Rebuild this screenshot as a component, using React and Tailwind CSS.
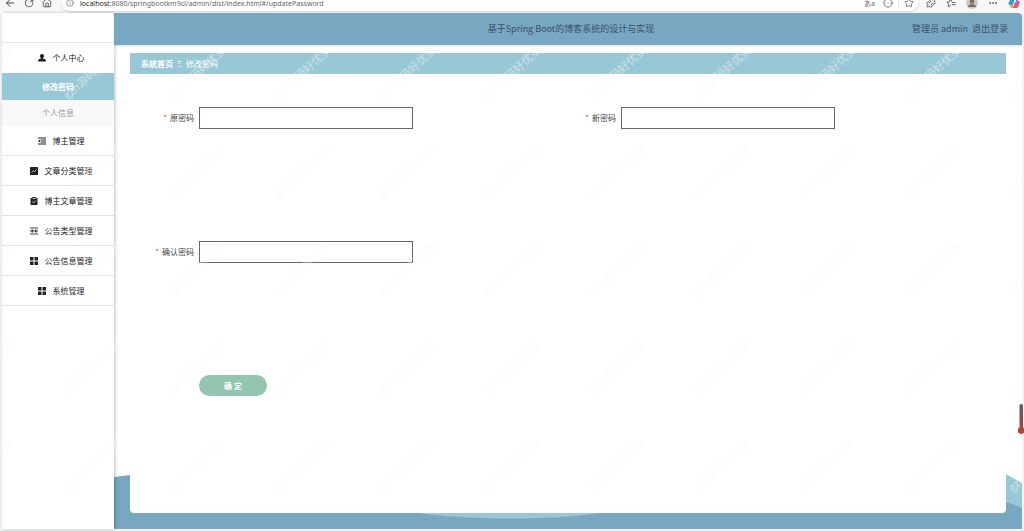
import React, { useState } from 'react';
import {
  LuArrowLeft,
  LuRotateCw,
  LuHouse,
  LuInfo,
  LuStar,
  LuPuzzle,
  LuEllipsis,
  LuCircleEllipsis,
} from 'react-icons/lu';

const icons = {
  user: (
    <path d="M8 0c2.500 0 4 1.800 4 4.200 0 1.800-.8 3.300-2 4v1l4.300 1.400c1 .4 1.500 1 1.500 2V15H.2v-2.400c0-1 .5-1.600 1.500-2L6 9.200v-1c-1.200-.7-2-2.200-2-4C4 1.800 5.500 0 8 0z" />
  ),
  fold: <path d="M0 1h16v2H0zM6 5h10v2H6zM6 9h10v2H6zM0 13h16v2H0zM0 8l4.500-3v6z" />,
  chart: (
    <>
      <rect width="16" height="16" rx="1" />
      <path d="M3 11l3.500-3.500 2 2L13 5" fill="none" stroke="#fff" strokeWidth="1.300" />
    </>
  ),
  claim: (
    <>
      <path d="M1 2h3.500V0h7v2H15v14H1z" />
      <path d="M5 3h6M4.500 9l2.800 2.500L11.800 7" fill="none" stroke="#fff" strokeWidth="1.500" />
    </>
  ),
  operation: <path d="M0 1h16v2H0zM0 13h16v2H0zM0 7h16v2H0zM3 5h3v6H3zM10 5h3v6h-3z" opacity=".85" />,
  grid: <path d="M0 0h7v7H0zM9 0h7v7H9zM0 9h7v7H0zM9 9h7v7H9z" />,
};

const menu = [
  { name: '博主管理', icon: 'fold' },
  { name: '文章分类管理', icon: 'chart' },
  { name: '博主文章管理', icon: 'claim' },
  { name: '公告类型管理', icon: 'operation' },
  { name: '公告信息管理', icon: 'grid' },
  { name: '系统管理', icon: 'grid' },
];

const fields = [
  { id: 'password', label: '原密码' },
  { id: 'newpassword', label: '新密码' },
  { id: 'ripassword', label: '确认密码' },
];

function MenuIcon({ name }) {
  return (
    <svg viewBox="0 0 16 16" className="h-2 w-2 shrink-0" fill="currentColor" aria-hidden="true">
      {icons[name]}
    </svg>
  );
}

function BrowserBar() {
  return (
    <div className="flex h-[13px] items-end overflow-hidden bg-[#f7f7f7] text-[#444]">
      <div className="flex h-5 flex-1 items-center">
        <div className="flex w-[62px] items-center gap-2 pl-1">
          <LuArrowLeft className="h-3 w-3" />
          <LuRotateCw className="h-[10px] w-[10px]" />
          <LuHouse className="h-[10px] w-[10px]" />
        </div>
        <div className="flex h-4 flex-1 items-center rounded-lg bg-white px-1 text-[7px] leading-none text-[#666] shadow-sm">
          <LuInfo className="mr-[6px] h-2 w-2" />
          <span className="flex-1 font-['Noto_Sans']">
            <span className="text-[#222]">localhost</span>:8080/springbootkm9ci/admin/dist/index.html#/updatePassword
          </span>
          <span className="pr-2">あa</span>
          <LuCircleEllipsis className="h-[10px] w-[10px]" />
          <span className="mx-[5px] h-3 w-px bg-gray-200" />
          <LuStar className="h-[10px] w-[10px]" />
        </div>
        <div className="flex items-center gap-[10px] pl-2 pr-1">
          <LuPuzzle className="h-[10px] w-[10px]" />
          <svg
            viewBox="0 0 24 24"
            className="h-[10px] w-[10px]"
            fill="none"
            stroke="currentColor"
            strokeWidth="2"
            aria-hidden="true"
          >
            <path d="M14 9l-3-6-3 6-6 1 4.500 4.500L5.500 21l5.500-3M14 11h9M14 16h9" />
          </svg>
          <svg viewBox="0 0 12 12" className="h-3 w-3" aria-hidden="true">
            <circle cx="6" cy="6" r="6" fill="#cfcbc8" />
            <circle cx="6" cy="4.500" r="2.300" fill="#77716d" />
            <path d="M2 10c0-4 8-4 8 0z" fill="#77716d" />
          </svg>
          <LuEllipsis className="h-[10px] w-[10px]" />
          <svg viewBox="0 0 12 12" className="h-3 w-3" aria-hidden="true">
            <path d="M3 1h4L5 8H2C0 8 0 6 1 5z" fill="#2f9be0" />
            <path d="M7 1c2 0 2 1 3 3h1c1 1 1 2 0 3L8 4z" fill="#8a5be0" />
            <path d="M1 7l4 1 1 3H4C2 11 2 9 1 7z" fill="#e8b23a" />
            <path d="M5 11l2-6h3c2 0 1 2 1 3-1 2-1 3-3 3z" fill="#e0567f" />
          </svg>
        </div>
      </div>
    </div>
  );
}

function Sidebar() {
  return (
    <aside className="z-10 w-28 shrink-0 bg-white text-[8px] text-[#222] shadow-[1px_0_3px_rgba(0,0,0,0.25)]">
      <div className="h-[30px] border-b border-[#e6e6e6]" />
      <nav>
        <a href="#/center" className="flex h-[30px] items-center justify-center gap-[7px] pl-[6px]">
          <MenuIcon name="user" />
          个人中心
        </a>
        <a
          href="#/updatePassword"
          className="flex h-[27px] items-center justify-center bg-[#98c8d6] font-bold text-white"
        >
          修改密码
        </a>
        <a href="#/info" className="flex h-[26px] items-center justify-center bg-[#f8f8f8] text-[#999]">
          个人信息
        </a>
        {menu.map((item) => (
          <a
            key={item.name}
            href="#/"
            className="flex h-[30px] items-center justify-center gap-[7px] border-b border-[#e2e2e2] pl-[6px]"
          >
            <MenuIcon name={item.icon} />
            {item.name}
          </a>
        ))}
      </nav>
    </aside>
  );
}

function PasswordForm() {
  const [values, setValues] = useState({});

  return (
    <form
      className="grid grid-cols-2 gap-y-28 px-4 pt-[33px] text-[8px] text-[#444]"
      onSubmit={(e) => e.preventDefault()}
    >
      {fields.map((field) => (
        <div key={field.id} className="flex items-center gap-[5px]">
          <label htmlFor={field.id} className="flex w-12 justify-end gap-[3px] whitespace-nowrap">
            <span className="text-[#e05050]">*</span>
            {field.label}
          </label>
          <input
            id={field.id}
            type="password"
            value={values[field.id] || ''}
            onChange={(e) => setValues({ ...values, [field.id]: e.target.value })}
            className="h-[22px] w-[214px] border border-[#666] bg-white px-2 outline-none"
          />
        </div>
      ))}
      <div className="col-span-2 pl-[53px]">
        <button type="submit" className="block h-[21px] w-[68px] rounded-full bg-[#93c5b1] font-bold text-white">
          确 定
        </button>
      </div>
    </form>
  );
}

function Waves() {
  return (
    <svg
      viewBox="0 0 908 484"
      preserveAspectRatio="none"
      className="absolute inset-0 h-full w-full"
      aria-hidden="true"
    >
      <path d="M250 484V455C500 380 800 380 892 429L908 438V484z" fill="#98c8d6" />
      <path
        d="M0 432L16 430C130 420 230 458 311 469C365 475 430 475 479 469C600 450 780 425 892 457L908 463V484H0z"
        fill="#78a7c1"
      />
    </svg>
  );
}

function Watermark() {
  return (
    <div
      className="pointer-events-none absolute inset-x-0 top-[23px] bottom-0 z-20 overflow-hidden"
      aria-hidden="true"
    >
      <div className="-ml-[66px] grid w-[calc(100%+140px)] auto-rows-[98px] grid-cols-[repeat(auto-fill,105px)]">
        {Array.from({ length: 55 }, (_, i) => (
          <span
            key={i}
            className="flex items-center justify-center whitespace-nowrap text-[11px] text-[#f8f8f8]/55"
          >
            <span className="-rotate-42">gzh源码好优多</span>
          </span>
        ))}
      </div>
    </div>
  );
}

function App() {
  return (
    <div className="relative flex min-h-screen flex-col overflow-hidden bg-white font-['Noto_Sans_CJK_SC',sans-serif]">
      <BrowserBar />
      <div className="flex flex-1 border-x-2 border-b-2 border-[#f1f4f5]">
        <Sidebar />
        <div className="flex flex-1 flex-col">
          <header className="relative z-30 grid h-8 grid-cols-[1fr_auto_1fr] items-center rounded-tr bg-[#78a7c1] pr-[14px] pl-5 text-[9px] text-[#3c4f70] shadow-sm">
            <h1 className="col-start-2">基于Spring Boot的博客系统的设计与实现</h1>
            <div className="flex justify-end gap-1">
              <span>管理员 admin</span>
              <button type="button">退出登录</button>
            </div>
          </header>
          <main className="relative flex flex-1 flex-col px-4 pt-2 pb-4">
            <Waves />
            <section className="relative flex-1 rounded-b bg-white">
              <div className="flex h-[21px] items-center gap-1 bg-[#98c8d6] px-[11px] text-[8px] text-white">
                <a href="#/" className="font-bold">系统首页</a>
                <span>Ξ</span>
                <span>修改密码</span>
              </div>
              <PasswordForm />
            </section>
          </main>
        </div>
      </div>
      <Watermark />
      <svg
        viewBox="0 0 8 32"
        className="absolute -right-[1px] bottom-[96px] z-30 h-8 w-2"
        aria-hidden="true"
      >
        <defs>
          <linearGradient id="thermo" x1="0" y1="0" x2="0" y2="1">
            <stop offset="0" stopColor="#5b6076" />
            <stop offset="0.600" stopColor="#8d4a4a" />
            <stop offset="1" stopColor="#b04a3a" />
          </linearGradient>
        </defs>
        <rect x="2.500" y="1" width="3.500" height="27" rx="1.500" fill="url(#thermo)" />
        <circle cx="4.200" cy="27.500" r="3.400" fill="#b04a3a" />
      </svg>
    </div>
  );
}

export default App;
